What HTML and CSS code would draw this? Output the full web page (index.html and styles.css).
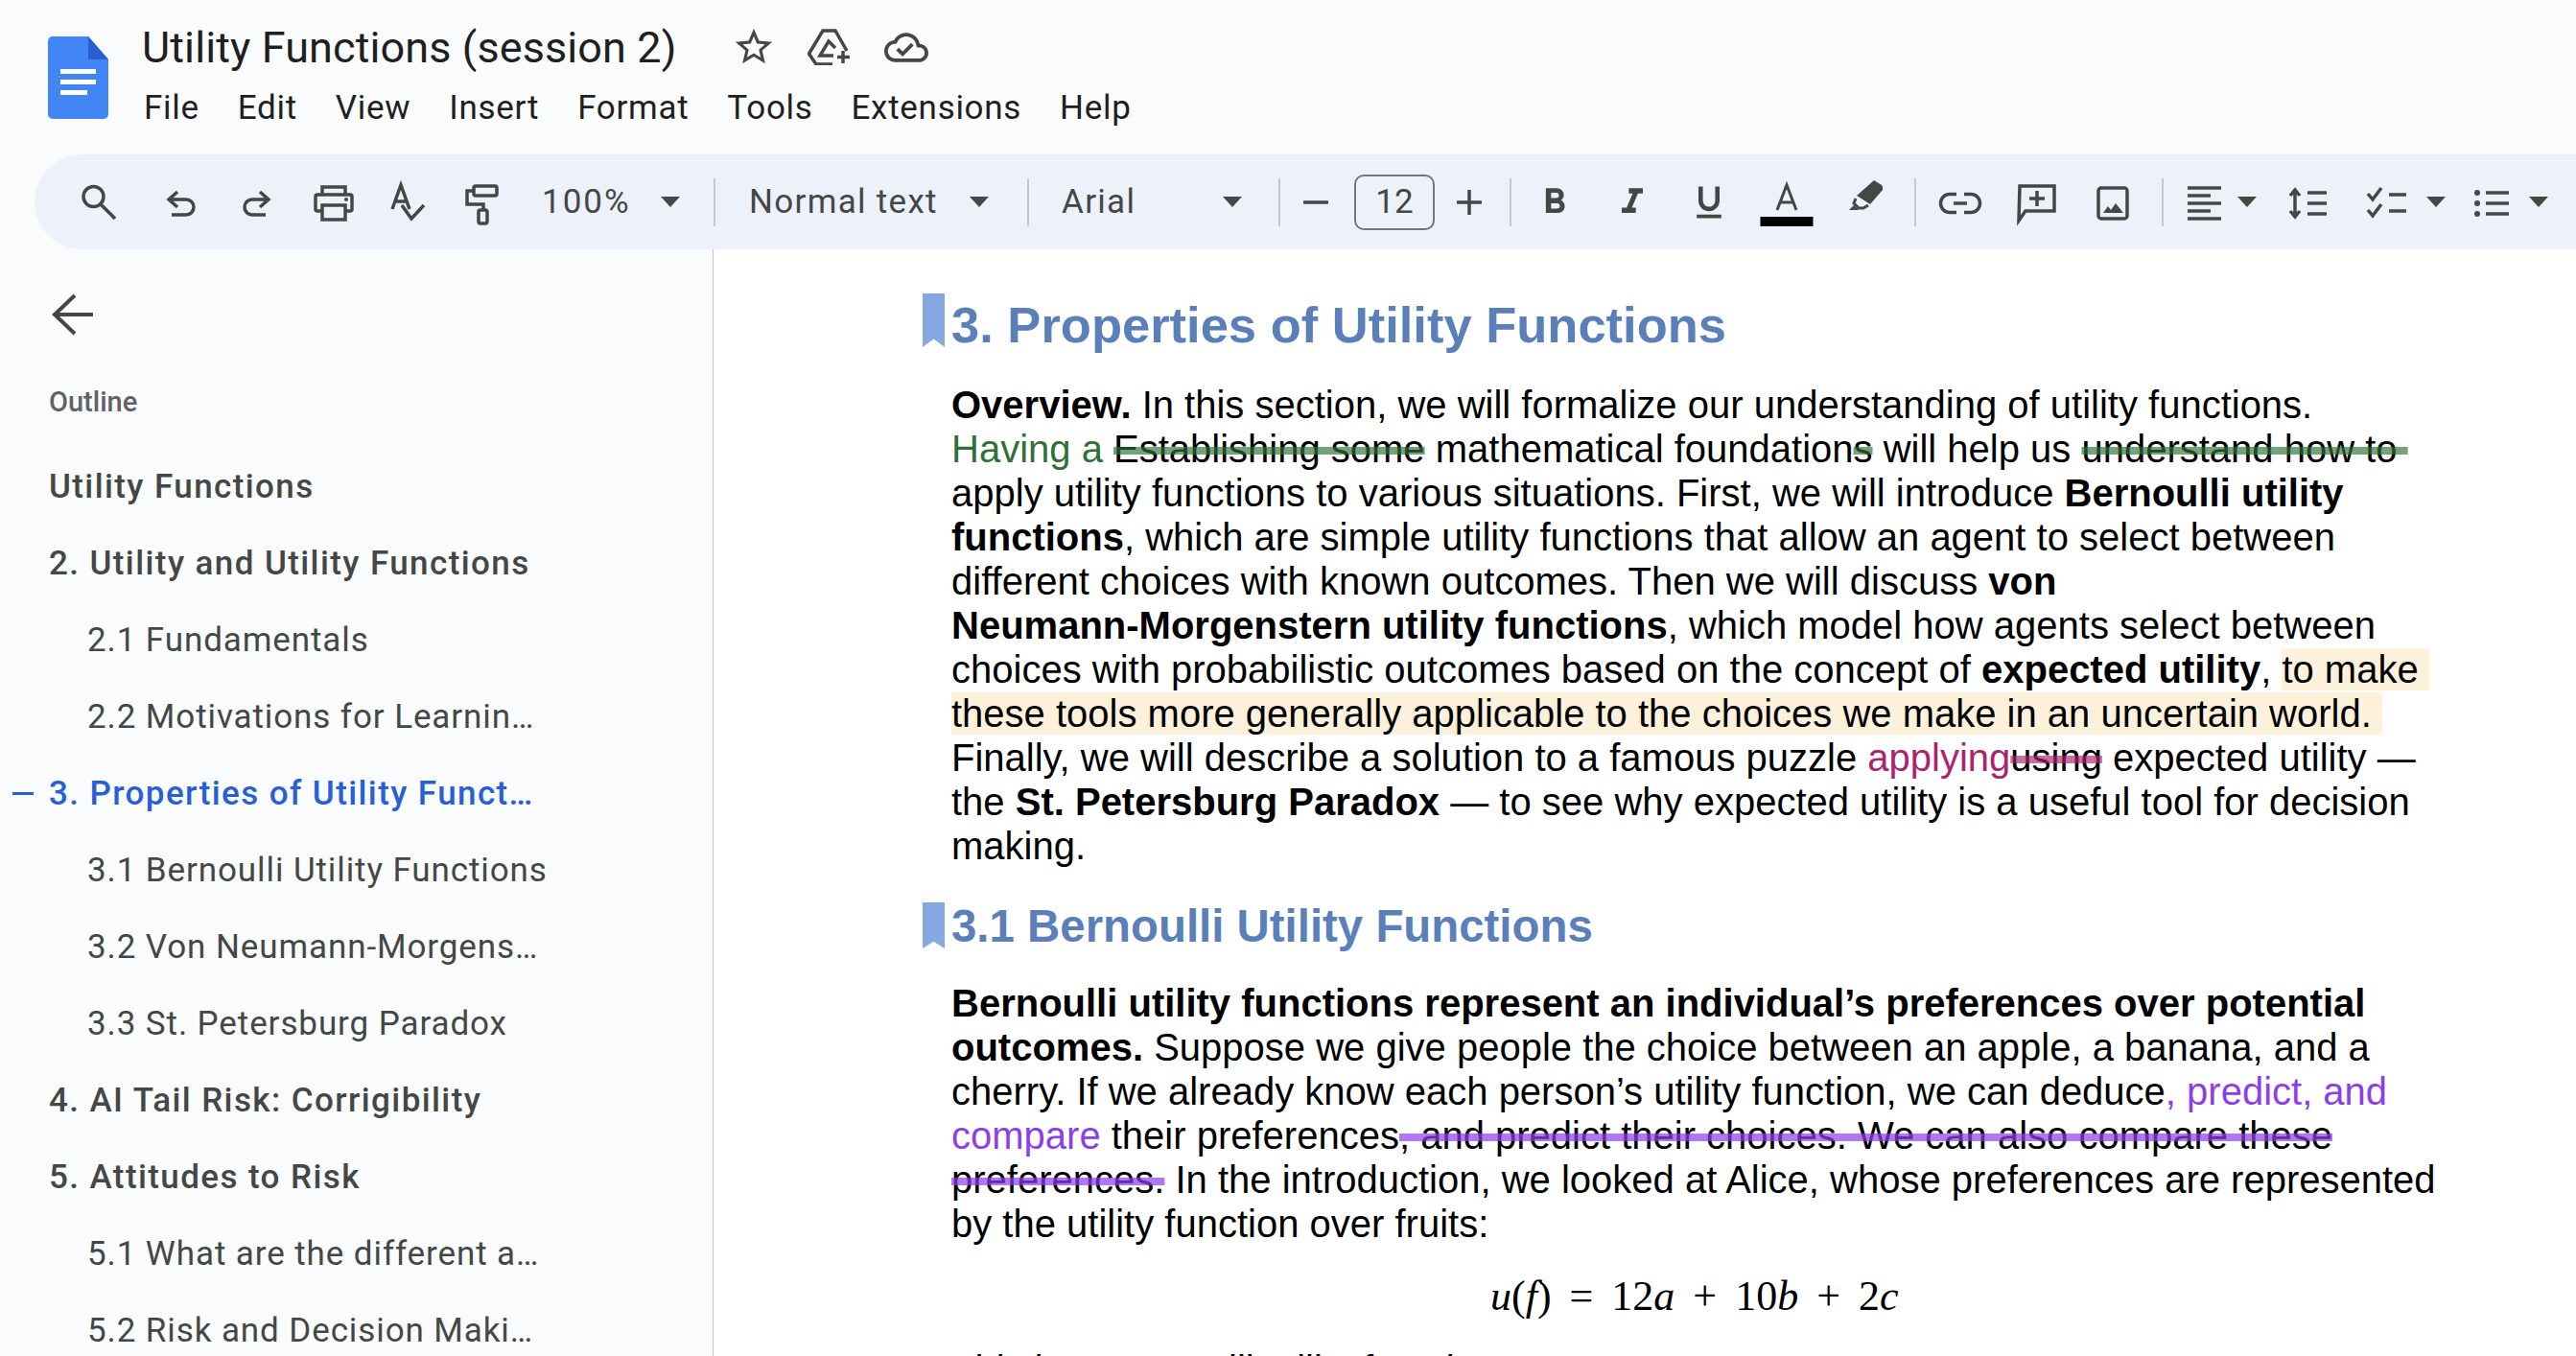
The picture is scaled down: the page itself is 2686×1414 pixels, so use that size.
FILE: index.html
```html
<!DOCTYPE html>
<html lang="en">
<head>
    <meta charset="UTF-8">
    <meta name="viewport" content="width=device-width, initial-scale=1.0">
    <title>Utility Functions (session 2)</title>
    <link rel="stylesheet" href="styles.css">
</head>
<body>
    <header class="topbar">
        <svg class="doc-logo" viewBox="0 0 63 86">
            <path fill="#4285f4" d="M5 0H42L63 24V81a5 5 0 0 1-5 5H5a5 5 0 0 1-5-5V5a5 5 0 0 1 5-5z"/>
            <path fill="#2a5fd0" d="M42 0L63 24H42z"/>
            <path fill="#fff" d="M13 34H50V39H13zM13 45H50V50H13zM13 56H41V61H13z"/>
        </svg>
        <div class="title-block">
            <div class="title-row">
                <span class="doc-title">Utility Functions (session 2)</span>
                <svg class="star-icon" viewBox="0 0 24 24"><path d="M22 9.24l-7.19-.62L12 2 9.19 8.63 2 9.24l5.46 4.73L5.82 21 12 17.27 18.18 21l-1.63-7.03L22 9.24zM12 15.4l-3.76 2.27 1-4.28-3.32-2.88 4.38-.38L12 6.1l1.71 4.04 4.38.38-3.32 2.88 1 4.28L12 15.4z"/></svg>
                <svg class="drive-icon line" viewBox="0 0 44 38">
                    <path d="M41 23L29 2H16L1.500 26L9 37H26"/>
                    <path d="M29 20L22 13L13 28H27"/>
                    <path class="thick" d="M37 23V36M31 29.500H44"/>
                </svg>
                <svg class="cloud-icon" viewBox="0 4 24 16"><path d="M19.35 10.04C18.67 6.59 15.64 4 12 4 9.11 4 6.6 5.64 5.35 8.04 2.34 8.36 0 10.91 0 14c0 3.31 2.69 6 6 6h13c2.76 0 5-2.24 5-5 0-2.64-2.05-4.78-4.65-4.96zM19 18H6c-2.21 0-4-1.79-4-4 0-2.05 1.53-3.76 3.56-3.97l1.07-.11.5-.95C8.08 7.14 9.94 6 12 6c2.62 0 4.88 1.86 5.39 4.43l.3 1.5 1.53.11c1.56.1 2.78 1.41 2.78 2.96 0 1.65-1.35 3-3 3zm-9-3.82l-2.09-2.09L6.5 13.5 10 17l6.01-6.01-1.41-1.41z"/></svg>
            </div>
            <nav class="menu">
                <span>File</span>
                <span>Edit</span>
                <span>View</span>
                <span>Insert</span>
                <span>Format</span>
                <span>Tools</span>
                <span>Extensions</span>
                <span>Help</span>
            </nav>
        </div>
    </header>

    <div class="toolbar">
        <div class="tb-group tb-main">
            <svg class="icon line" viewBox="0 0 44 44"><circle cx="16.500" cy="16" r="10.500"/><path d="M24 24L39 39"/></svg>
            <svg class="icon line" viewBox="0 0 44 44"><path d="M24 11L15 19L24 27M15 19H33a8 8 0 0 1 0 16H18"/></svg>
            <svg class="icon line" viewBox="0 0 44 44"><path d="M30 11L39 19L30 27M39 19H22a8 8 0 0 0 0 16H36"/></svg>
            <svg class="icon line" viewBox="0 0 44 44"><path d="M15 14V6H39V14M15 31H10a2 2 0 0 1-2-2V16a2 2 0 0 1 2-2H44a2 2 0 0 1 2 2V29a2 2 0 0 1-2 2H39M15 25H39V40H15z"/><circle class="dot" cx="40" cy="19" r="2"/></svg>
            <svg class="icon line" viewBox="0 0 44 44"><path d="M8 29L17 4L26 29M11 21H23"/><path d="M18 25L28 39L41 25"/></svg>
            <svg class="icon line" viewBox="0 0 44 44"><rect x="13" y="5" width="24" height="10" rx="2"/><path d="M13 10H6V24H23V30"/><rect x="18" y="30" width="9" height="14" rx="2"/></svg>
        </div>
        <div class="tb-select tb-zoom"><span>100%</span><i class="caret"></i></div>
        <div class="tb-sep"></div>
        <div class="tb-select tb-style"><span>Normal text</span><i class="caret"></i></div>
        <div class="tb-sep"></div>
        <div class="tb-select tb-font"><span>Arial</span><i class="caret"></i></div>
        <div class="tb-sep"></div>
        <div class="tb-group tb-size">
            <svg class="icon-sm line" viewBox="0 0 40 40"><path d="M7 20H33"/></svg>
            <div class="size-box">12</div>
            <svg class="icon-sm line" viewBox="0 0 40 40"><path d="M7 20H33M20 7V33"/></svg>
        </div>
        <div class="tb-sep"></div>
        <div class="tb-group tb-format">
            <svg class="icon solid" viewBox="0 0 24 24"><path d="M15.6 10.79c.97-.67 1.65-1.77 1.65-2.79 0-2.26-1.75-4-4-4H7v14h7.04c2.09 0 3.71-1.7 3.71-3.79 0-1.52-.86-2.82-2.15-3.42zM10 6.5h3c.83 0 1.5.67 1.5 1.5s-.67 1.5-1.500 1.500h-3v-3zm3.500 9H10v-3h3.500c.83 0 1.500.67 1.500 1.500s-.67 1.500-1.500 1.500z"/></svg>
            <svg class="icon solid" viewBox="0 0 24 24"><path d="M10 4v3h2.210l-3.420 8H6v3h8v-3h-2.210l3.420-8H18V4z"/></svg>
            <svg class="icon solid" viewBox="0 0 24 24"><path d="M12 17c3.310 0 6-2.690 6-6V3h-2.500v8c0 1.930-1.570 3.500-3.500 3.500S8.500 12.930 8.500 11V3H6v8c0 3.310 2.690 6 6 6zm-7 2v2h14v-2H5z"/></svg>
            <svg class="icon line thin" viewBox="0 0 44 44"><path d="M12 30L22 4L32 30M15.500 22H28.500"/><rect class="ink" x="-5.500" y="37" width="55" height="10"/></svg>
            <svg class="icon line thin" viewBox="0 0 44 44"><path class="dot" d="M33 -1L41 4Q43 6 42 9L29 24L15 15z"/><path d="M14 18L12 23L17 28H22L27 25"/><path class="dot" d="M7 30L12 25L17 30z"/></svg>
        </div>
        <div class="tb-sep"></div>
        <div class="tb-group tb-insert">
            <svg class="icon line" viewBox="0 0 44 44"><path d="M18 13.500H11a9 9 0 0 0 0 19H18M26 13.500H33a9 9 0 0 1 0 19H26M15 23H29"/></svg>
            <svg class="icon line" viewBox="0 0 44 44"><path d="M4 5H40V31H10L3 41z"/><path d="M22 10V26M14 18H30"/></svg>
            <svg class="icon line" viewBox="0 0 44 44"><rect x="7" y="7" width="30" height="32" rx="3"/><path class="dot" d="M12 33L17 26L20 30L25 23L33 33z"/></svg>
        </div>
        <div class="tb-sep"></div>
        <div class="tb-group tb-lists">
            <div class="tb-drop tb-drop-align">
                <svg class="icon line" viewBox="0 0 44 44"><path d="M6 7H41M6 15H30M6 23H41M6 31H30M6 39H41"/></svg>
                <i class="caret"></i>
            </div>
            <svg class="icon line tb-spacing" viewBox="0 0 44 44"><path d="M10 10V36M5 15L10 9L15 15M5 31L10 37L15 31M23 12H43M23 23H43M23 34H43"/></svg>
            <div class="tb-drop tb-drop-check">
                <svg class="icon line" viewBox="0 0 44 44"><path d="M4 13L9 19L18 7M4 30L9 36L18 24M26 14H44M26 31H44"/></svg>
                <i class="caret"></i>
            </div>
            <div class="tb-drop tb-drop-bullet">
                <svg class="icon line" viewBox="0 0 44 44"><circle class="dot" cx="8" cy="12" r="3"/><circle class="dot" cx="8" cy="23" r="3"/><circle class="dot" cx="8" cy="34" r="3"/><path d="M17 12H41M17 23H41M17 34H41"/></svg>
                <i class="caret"></i>
            </div>
        </div>
    </div>

    <div class="main">
        <aside class="outline">
            <svg class="back-arrow" viewBox="0 0 44 44"><path d="M46 23H7M27 3L6 23L27 43"/></svg>
            <div class="outline-label">Outline</div>
            <ul class="outline-list">
                <li class="h1">Utility Functions</li>
                <li class="h1">2. Utility and Utility Functions</li>
                <li class="h2">2.1 Fundamentals</li>
                <li class="h2">2.2 Motivations for Learnin…</li>
                <li class="h1 active">3. Properties of Utility Funct…</li>
                <li class="h2">3.1 Bernoulli Utility Functions</li>
                <li class="h2">3.2 Von Neumann-Morgens…</li>
                <li class="h2">3.3 St. Petersburg Paradox</li>
                <li class="h1">4. AI Tail Risk: Corrigibility</li>
                <li class="h1">5. Attitudes to Risk</li>
                <li class="h2">5.1 What are the different a…</li>
                <li class="h2">5.2 Risk and Decision Maki…</li>
            </ul>
        </aside>
        <main class="doc">
            <h1 class="heading">3. Properties of Utility Functions</h1>
            <p><b>Overview.</b> In this section, we will formalize our understanding of utility functions. <span class="ins-green">Having a</span> <del class="del-green">Establishing some</del> mathematical foundation<del class="del-green">s</del> will help us <del class="del-green">understand how to&nbsp;</del> apply utility functions to various situations. First, we will introduce <b>Bernoulli utility functions</b>, which are simple utility functions that allow an agent to select between different choices with known outcomes. Then we will discuss <b>von <span class="nowrap">Neumann-Morgenstern</span> utility functions</b>, which model how agents select between choices with probabilistic outcomes based on the concept of <b>expected utility</b>, <span class="hl">to make&nbsp; these tools more generally applicable to the choices we make in an uncertain world.&nbsp;</span> Finally, we will describe a solution to a famous puzzle <span class="ins-pink">applying</span><del class="del-pink">using</del> expected utility — the <b>St. Petersburg Paradox</b> — to see why expected utility is a useful tool for decision making.</p>
            <h2 class="heading">3.1 Bernoulli Utility Functions</h2>
            <p><b>Bernoulli utility functions represent an individual’s preferences over potential outcomes.</b> Suppose we give people the choice between an apple, a banana, and a cherry. If we already know each person’s utility function, we can deduce<span class="ins-purple">, predict, and compare</span> their preferences<del class="del-purple">, and predict their choices. We can also compare these preferences.</del> In the introduction, we looked at Alice, whose preferences are represented by the utility function over fruits:</p>
            <div class="equation"><i>u</i>(<i>f</i>) = 12<i>a</i> + 10<i>b</i> + 2<i>c</i></div>
            <p class="next-line">This is a Bernoulli utility function.</p>
        </main>
    </div>
</body>
</html>
```

FILE: styles.css
```css
html, body {
    margin: 0;
    height: 100%;
}

body {
    width: 2686px;
    height: 1414px;
    overflow: hidden;
    background: #f9fbfd;
    font-family: Roboto, sans-serif;
    color: #444746;
}

/* title area */
.topbar {
    display: flex;
    height: 161px;
    padding-left: 50px;
    box-sizing: border-box;
}

.doc-logo {
    width: 63px;
    height: 86px;
    margin-top: 38px;
    margin-right: 35px;
}

.title-block {
    display: flex;
    flex-direction: column;
}

.title-row {
    display: flex;
    align-items: center;
    height: 54px;
    margin-top: 22px;
}

.doc-title {
    font-size: 45px;
    letter-spacing: 0.1px;
    color: #1f1f1f;
    width: 615px;
}

.star-icon {
    width: 46px;
    height: 46px;
    fill: #444746;
}

.drive-icon {
    width: 44px;
    height: 38px;
    margin-left: 33px;
}

.cloud-icon {
    width: 46px;
    height: 31px;
    margin-left: 36px;
    fill: #444746;
}

.menu {
    display: flex;
    gap: 40px;
    margin-top: 16px;
    margin-left: 2px;
    font-size: 35px;
    letter-spacing: 0.7px;
    color: #1f1f1f;
}

/* toolbar */
.toolbar {
    display: flex;
    align-items: center;
    height: 99px;
    margin-left: 36px;
    padding-left: 45px;
    background: #edf2fa;
    border-radius: 50px 0 0 50px;
    font-size: 35px;
    letter-spacing: 1.3px;
}

.tb-group {
    display: flex;
    align-items: center;
}

.tb-main {
    gap: 36px;
}

.icon {
    width: 44px;
    height: 44px;
    overflow: visible;
    flex: none;
}

.icon-sm {
    width: 40px;
    height: 40px;
    flex: none;
}

.line {
    fill: none;
    stroke: #444746;
    stroke-width: 3.5;
}

.thin {
    stroke-width: 3;
}

.thick {
    stroke-width: 3.5;
}

.dot {
    fill: #444746;
    stroke: none;
}

.ink {
    fill: #000;
    stroke: none;
}

.solid {
    fill: #444746;
}

.caret {
    display: block;
    width: 0;
    height: 0;
    flex: none;
    border-left: 10px solid transparent;
    border-right: 10px solid transparent;
    border-top: 11px solid #444746;
}

.tb-sep {
    width: 2px;
    height: 50px;
    background: #c7c7c7;
    flex: none;
}

.tb-select {
    display: flex;
    align-items: center;
    justify-content: space-between;
    box-sizing: border-box;
    flex: none;
}

.tb-zoom {
    width: 179px;
    margin-left: 40px;
    padding-right: 35px;
    letter-spacing: 2px;
}

.tb-style {
    width: 290px;
    margin-left: 35px;
    padding-right: 40px;
}

.tb-font {
    width: 226px;
    margin-left: 34px;
    padding-right: 38px;
}

.tb-size {
    gap: 18px;
    margin: 0 22px 0 17px;
}

.size-box {
    width: 84px;
    height: 58px;
    margin: 0 -2px 0 2px;
    box-sizing: border-box;
    border: 2px solid #747775;
    border-radius: 10px;
    display: flex;
    align-items: center;
    justify-content: center;
    letter-spacing: 0;
}

.tb-format {
    gap: 36.500px;
    margin: 0 31px 0 23px;
}

.tb-insert {
    gap: 35.500px;
    margin: 0 29px 0 24px;
}

.tb-lists {
    gap: 25px;
    margin-left: 19px;
}

.tb-drop {
    display: flex;
    align-items: center;
}

.tb-drop-align {
    gap: 14px;
}

.tb-drop-check {
    gap: 21px;
}

.tb-drop-bullet {
    gap: 18px;
}

.tb-spacing {
    margin: 0 13px 0 5px;
}

/* main area */
.main {
    display: flex;
    height: 1154px;
}

.outline {
    width: 744px;
    height: 100%;
    flex: none;
    padding-left: 51px;
    box-sizing: border-box;
    border-right: 1px solid #c7c7c7;
}

.back-arrow {
    display: block;
    width: 44px;
    height: 44px;
    margin-top: 45px;
    overflow: visible;
    fill: none;
    stroke: #444746;
    stroke-width: 4;
}

.outline-label {
    margin-top: 53px;
    font-size: 29px;
    font-weight: 500;
    color: #5f6368;
}

.outline-list {
    list-style: none;
    margin: 32px 0 0;
    padding: 0;
    font-size: 35px;
    letter-spacing: 0.9px;
}

.outline-list li {
    height: 80px;
    line-height: 80px;
    white-space: nowrap;
}

.outline-list .h1 {
    font-weight: 500;
    letter-spacing: 1.4px;
}

.outline-list .h2 {
    padding-left: 40px;
}

.outline-list .active {
    position: relative;
    color: #2860d4;
}

.outline-list .active::before {
    content: "";
    position: absolute;
    left: -38px;
    top: 38px;
    width: 22px;
    height: 3px;
    background: #2860d4;
}

.doc {
    flex: 1;
    background: #fff;
    padding-left: 248px;
    padding-right: 143px;
    font-family: "Liberation Sans", Arial, sans-serif;
    font-size: 40px;
    line-height: 46px;
    color: #000;
}

.doc p {
    margin: 0;
}

.nowrap {
    white-space: nowrap;
}

.heading {
    position: relative;
    margin: 0;
    font-weight: 700;
    color: #5b80b9;
}

.heading::before {
    content: "";
    position: absolute;
    left: -30px;
    width: 23px;
    background: #85a8e0;
    clip-path: polygon(0 0, 100% 0, 100% 100%, 50% 85%, 0 100%);
}

h1.heading {
    font-size: 52.500px;
    line-height: 78px;
    margin-top: 40px;
    margin-bottom: 21px;
}

h1.heading::before {
    top: 6px;
    height: 56px;
}

h2.heading {
    font-size: 47.400px;
    line-height: 60px;
    margin-top: 31px;
    margin-bottom: 27px;
}

h2.heading::before {
    top: 5px;
    height: 48px;
}

.ins-green {
    color: #2e7036;
}

.ins-pink {
    color: #a9246f;
}

.ins-purple {
    color: #8e3ee8;
}

del {
    text-decoration: line-through;
    text-decoration-thickness: 8px;
}

.del-green {
    text-decoration-color: rgba(46, 112, 54, 0.66);
}

.del-pink {
    text-decoration-color: rgba(169, 36, 111, 0.66);
}

.del-purple {
    text-decoration-color: rgba(142, 62, 232, 0.7);
}

.hl {
    background: #fdf1dc;
}

.equation {
    margin-top: 30px;
    padding-left: 562px;
    font-family: "Liberation Serif", serif;
    font-size: 44px;
    word-spacing: 8px;
    white-space: pre;
}

.doc .next-line {
    margin-top: 30px;
}
```
